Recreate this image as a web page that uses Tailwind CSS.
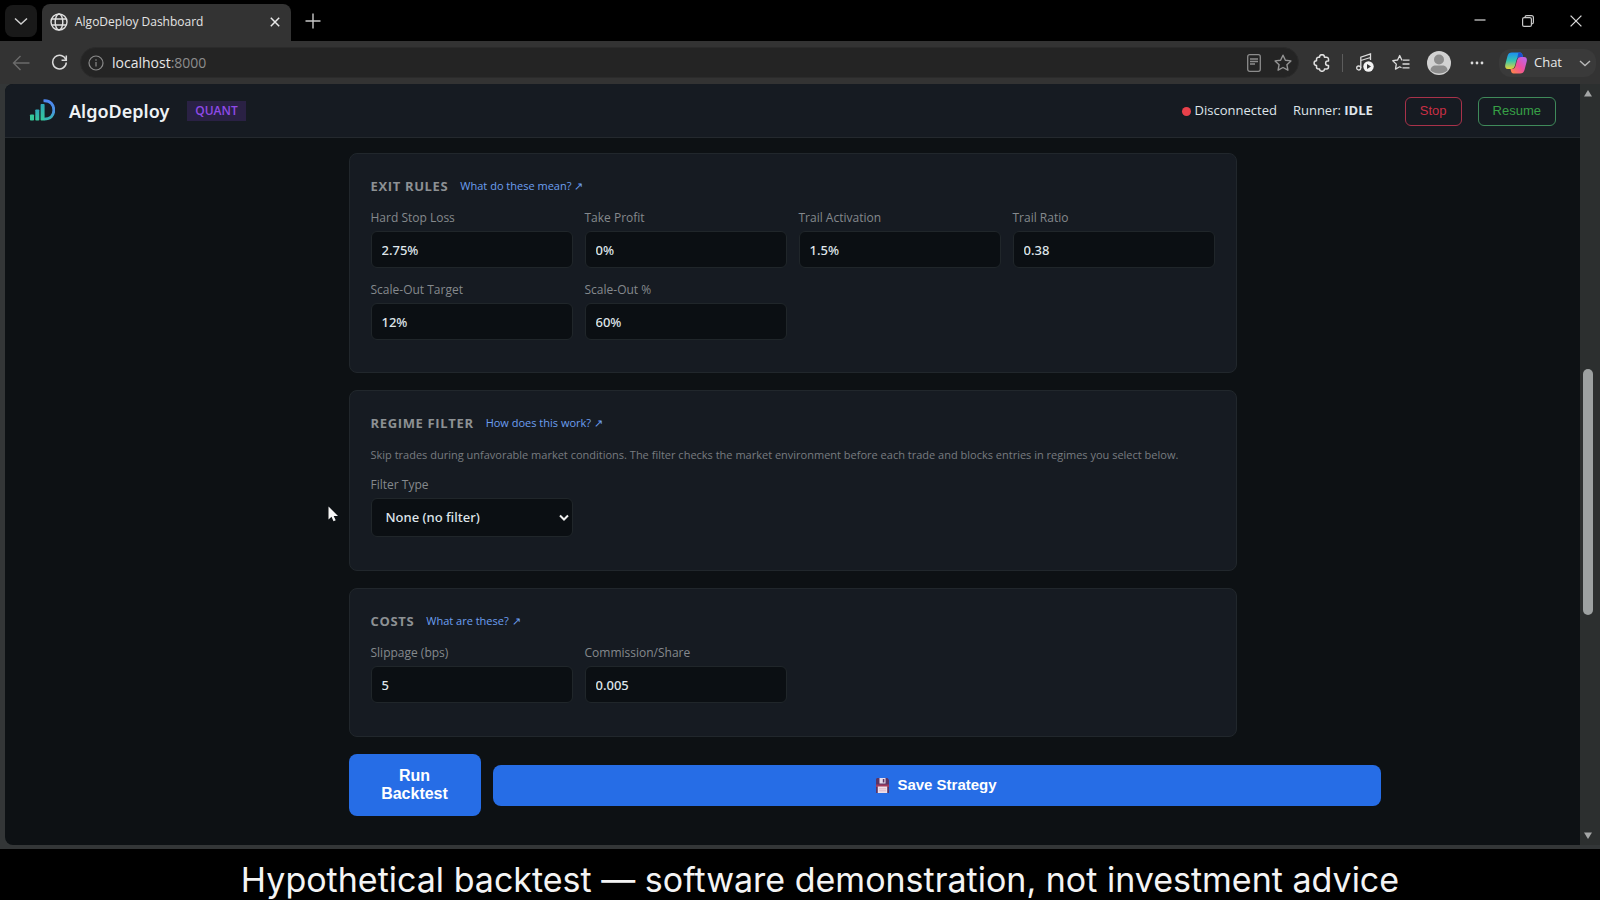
<!DOCTYPE html>
<html lang="en">
<head>
<meta charset="utf-8">
<meta name="viewport" content="width=device-width, initial-scale=1">
<title>AlgoDeploy Dashboard</title>
<script src="https://cdn.jsdelivr.net/npm/@tailwindcss/browser@4"></script>
</head>
<body class="relative flex h-screen flex-col overflow-hidden bg-black font-['Open_Sans','Noto_Sans',sans-serif] text-[#dfe5ea]">

  <!-- Tab strip -->
  <div class="flex h-[41px] shrink-0 items-end justify-between bg-black">
    <div class="flex h-full items-end">
      <button type="button" aria-label="Tab actions" class="mb-1 ml-[5px] flex h-8 w-8 items-center justify-center rounded-lg bg-[#191919]">
        <svg class="h-4 w-4" viewBox="0 0 16 16" fill="none" stroke="#d0d0d0" stroke-width="1.5"><path d="M2 5.500l6 5.500 6-5.500"/></svg>
      </button>
      <div class="ml-[5px] flex h-[37px] w-[249px] items-center rounded-t-lg bg-[#333333] px-2 pb-[2px]">
        <svg class="h-[18px] w-[18px] shrink-0" viewBox="0 0 18 18" fill="none" stroke="#e0e0e0" stroke-width="1.400"><circle cx="9" cy="9" r="8"/><ellipse cx="9" cy="9" rx="3.800" ry="8"/><path d="M1.800 6h14.400M1.800 12h14.400"/></svg>
        <span class="ml-[7px] flex-1 whitespace-nowrap text-[12px] text-[#e4e4e4]">AlgoDeploy Dashboard</span>
        <button type="button" aria-label="Close tab" class="flex h-4 w-4 items-center justify-center">
          <svg class="h-[10px] w-[10px]" viewBox="0 0 10 10" stroke="#e8e8e8" stroke-width="1.500"><path d="M.8.8l8.400 8.400M9.200.8L.8 9.200"/></svg>
        </button>
      </div>
      <button type="button" aria-label="New tab" class="ml-[14px] flex h-full w-4 items-center justify-center">
        <svg class="h-4 w-4" viewBox="0 0 16 16" stroke="#c8c8c8" stroke-width="1.400"><path d="M8 .5v15M.5 8h15"/></svg>
      </button>
    </div>
    <div class="flex h-full items-center gap-9 pr-[18px]">
      <button type="button" aria-label="Minimize" class="flex h-4 w-3 items-center justify-center"><svg class="h-3 w-3" viewBox="0 0 12 12" stroke="#c8c8c8" stroke-width="1.300"><path d="M.5 5h11"/></svg></button>
      <button type="button" aria-label="Restore" class="flex h-4 w-3 items-center justify-center"><svg class="h-3 w-3" viewBox="0 0 12 12" fill="none" stroke="#c8c8c8" stroke-width="1.200"><rect x=".6" y="2.600" width="8.800" height="8.800" rx="1.500"/><path d="M3 2.400C3 1.300 3.600.6 4.700.6h4.800c1.200 0 1.900.7 1.900 1.900v4.800c0 1.100-.7 1.700-1.800 1.700"/></svg></button>
      <button type="button" aria-label="Close window" class="flex h-4 w-3 items-center justify-center"><svg class="h-3 w-3" viewBox="0 0 12 12" stroke="#d8d8d8" stroke-width="1.300"><path d="M.6.6l10.800 10.800M11.400.6L.6 11.400"/></svg></button>
    </div>
  </div>

  <!-- Toolbar -->
  <div class="flex h-[43px] shrink-0 items-center bg-[#333333]">
    <button type="button" aria-label="Back" class="ml-3 flex h-5 w-[18px] items-center justify-center">
      <svg class="h-[18px] w-[18px]" viewBox="0 0 18 18" fill="none" stroke="#6b6b6b" stroke-width="1.400"><path d="M17.500 9H1.500M8.500 2L1.500 9l7 7"/></svg>
    </button>
    <button type="button" aria-label="Refresh" class="ml-5 flex h-5 w-[18px] items-center justify-center">
      <svg class="h-[17px] w-[17px]" viewBox="0 0 18 18" fill="none" stroke="#dadada" stroke-width="1.600"><path d="M15.800 6.200A7.200 7.200 0 1 0 16.200 9"/><path d="M16.200 1.500v5h-5"/></svg>
    </button>
    <div class="ml-3 flex h-[31px] flex-1 items-center rounded-full border border-[#2b2b2b] bg-[#242424] pl-[7px] pr-[6px]">
      <svg class="h-4 w-4 shrink-0" viewBox="0 0 16 16" fill="none" stroke="#8a8a8a" stroke-width="1.200"><circle cx="8" cy="8" r="7"/><path d="M8 7v4.500M8 4.300v1.400"/></svg>
      <div role="textbox" aria-label="Address" class="ml-2 flex-1 text-[14px] text-[#e8e8e8]">localhost<span class="text-[#8d8d8d]">:8000</span></div>
      <svg class="h-[18px] w-[14px]" viewBox="0 0 14 18" fill="none" stroke="#8c8c8c" stroke-width="1.300"><rect x=".7" y=".7" width="12.600" height="16.600" rx="2"/><path d="M3 5h8M3 7.500h8M3 10h5"/></svg>
      <svg class="ml-[13px] h-[18px] w-[18px]" viewBox="0 0 18 18" fill="none" stroke="#949494" stroke-width="1.400" stroke-linejoin="round"><path d="M9 1.200l2.400 5 5.500.7-4 3.800 1 5.500L9 13.500l-4.900 2.700 1-5.500-4-3.800 5.500-.7z"/></svg>
    </div>
    <button type="button" aria-label="Extensions" class="ml-[14px]">
      <svg class="h-[18px] w-[18px]" viewBox="0 0 18 18" fill="none" stroke="#e0e0e0" stroke-width="1.500" stroke-linejoin="round"><path d="M6.500 3.200a2.500 2.500 0 0 1 5 0H13.500a2 2 0 0 1 2 2V7h-.7a2.200 2.200 0 0 0 0 4.400h.7v1.600a2 2 0 0 1-2 2h-2a2.500 2.300 0 0 1-5 0h-1a2 2 0 0 1-2-2v-1.500a2.400 2.400 0 0 1 0-4.800V5.200a2 2 0 0 1 2-2z"/></svg>
    </button>
    <span class="ml-[11px] h-[18px] w-px bg-[#5c5c5c]"></span>
    <button type="button" aria-label="Media" class="ml-[13px]">
      <svg class="h-[19px] w-[18px]" viewBox="0 0 18 19" fill="none" stroke="#dcdcdc" stroke-width="1.300"><circle cx="2.700" cy="15" r="2"/><path d="M4.800 15V4.200L14.500 1v6M4.800 7.500l9.700-3"/><circle cx="12.500" cy="13.500" r="5.200" fill="#f2f2f2" stroke="none"/><path d="M11 11v5l4-2.500z" fill="#333" stroke="none"/></svg>
    </button>
    <button type="button" aria-label="Favorites" class="ml-[18px]">
      <svg class="h-[18px] w-[18px]" viewBox="0 0 18 18" fill="none" stroke="#dcdcdc" stroke-width="1.300" stroke-linejoin="round"><path d="M10.500 6.200L9.800 6 7.700 1.500 5.600 6 .8 6.700l3.500 3.400-.8 5 4.200-2.300 1.800 1"/><path d="M11 6.200h6.500M10.500 10h7M10.500 13.800h7"/></svg>
    </button>
    <button type="button" aria-label="Profile" class="ml-[17px] h-6 w-6">
      <svg class="h-6 w-6" viewBox="0 0 24 24"><circle cx="12" cy="12" r="12" fill="#d2d2d2"/><circle cx="12" cy="8.500" r="5" fill="#8c8c8c"/><path d="M3.500 19.500c0-3.500 2.500-5 5-5h7c2.500 0 5 1.500 5 5-4.500 4-12.500 4-17 0z" fill="#8c8c8c"/></svg>
    </button>
    <button type="button" aria-label="Settings and more" class="ml-[19px]">
      <svg class="h-4 w-[14px]" viewBox="0 0 14 16" fill="#dcdcdc"><circle cx="2" cy="8" r="1.400"/><circle cx="7" cy="8" r="1.400"/><circle cx="12" cy="8" r="1.400"/></svg>
    </button>
    <button type="button" class="ml-[15px] mr-1 flex h-7 items-center rounded-xl bg-[#3a3a3a] px-[5px] text-[13px] text-[#e8e8e8]">
      <svg class="h-6 w-6" viewBox="0 0 24 24">
        <defs>
          <linearGradient id="cpa" x1="0" y1="0" x2="0" y2="1"><stop offset="0" stop-color="#1b8df2"/><stop offset=".5" stop-color="#35c4b0"/><stop offset="1" stop-color="#e8d43a"/></linearGradient>
          <linearGradient id="cpb" x1="1" y1="0" x2="0" y2="1"><stop offset="0" stop-color="#b56af5"/><stop offset=".5" stop-color="#ee4fa0"/><stop offset="1" stop-color="#ff8a3c"/></linearGradient>
        </defs>
        <path d="M8 1.500h8c1.500 0 2 1 2.500 2.500L19 6h-3c-2 0-3 1-3.500 3L11 14.500C10.300 17 9 18 7 18H4c-2.500 0-3.300-2-2.700-4.500L3.500 5C4.200 2.500 5.500 1.500 8 1.500z" fill="url(#cpa)"/>
        <path d="M14.500 1.500H16c1.500 0 2 1 2.500 2.500L19 6h-3c-1.500 0-2.500.7-3 2z" fill="#1f4fd0"/>
        <path d="M16 22.500H9.500c-1.500 0-2.200-1-2.500-2.500L6.500 18H8c2 0 3-1 3.500-3L13 9.500c.7-2.500 2-3.500 4-3.500h3c2.500 0 3.300 2 2.700 4.500L20.500 19c-.7 2.500-2 3.500-4.500 3.500z" fill="url(#cpb)"/>
      </svg>
      <span class="ml-[6px]">Chat</span>
      <svg class="ml-[17px] h-3 w-3" viewBox="0 0 12 12" fill="none" stroke="#b8b8b8" stroke-width="1.400"><path d="M1 4l5 4.500L11 4"/></svg>
    </button>
  </div>

  <!-- Page viewport -->
  <div class="flex min-h-0 flex-1 bg-[#333637] pb-1 pl-[5px]">
    <div class="flex min-w-0 flex-1 flex-col overflow-hidden rounded-bl-lg rounded-tl-lg bg-[#0d1114]">
      <header class="flex h-[54px] shrink-0 items-center justify-between border-b border-[#24292e] bg-[#161b22] px-6 pt-px">
        <div class="flex items-center">
          <svg class="h-6 w-[26px]" viewBox="0 0 26 24">
            <defs>
              <linearGradient id="bar" x1="0" y1="0" x2="0" y2="1"><stop offset="0" stop-color="#2fa6b8"/><stop offset="1" stop-color="#35c99a"/></linearGradient>
              <linearGradient id="dee" x1="0" y1="0" x2="0" y2="1"><stop offset="0" stop-color="#4d86f0"/><stop offset=".6" stop-color="#4a94e0"/><stop offset="1" stop-color="#35b8b0"/></linearGradient>
            </defs>
            <rect x="1" y="15.500" width="4" height="6" rx=".8" fill="#35c99a"/>
            <rect x="6.300" y="10.500" width="4" height="11" rx=".8" fill="url(#bar)"/>
            <rect x="11.600" y="5" width="4" height="16.500" rx=".8" fill="url(#bar)"/>
            <path d="M14.500 1.800C21.500 1.200 24.800 6 24.800 11.300c0 5.300-3.300 8.800-9.800 8.800" fill="none" stroke="url(#dee)" stroke-width="2.800"/>
          </svg>
          <h1 class="ml-[14px] text-[18px] font-semibold text-[#eef2f5] font-['Noto_Sans',sans-serif]">AlgoDeploy</h1>
          <span class="ml-[18px] bg-[#2a2144] px-2 text-[12px] font-semibold leading-5 text-[#8f4ae8]">QUANT</span>
        </div>
        <div class="flex items-center text-[13px]">
          <span class="h-[9px] w-[9px] rounded-full bg-[#e8404a]"></span>
          <span class="ml-1">Disconnected</span>
          <span class="ml-4">Runner: <strong class="font-bold">IDLE</strong></span>
          <button type="button" class="ml-8 h-[29px] rounded-md border border-[#a8324a] px-[14px] font-['Liberation_Sans',sans-serif] text-[13px] text-[#c92f45]">Stop</button>
          <button type="button" class="ml-4 h-[29px] rounded-md border border-[#3f8a5a] px-[14px] font-['Liberation_Sans',sans-serif] text-[13px] text-[#37a046]">Resume</button>
        </div>
      </header>

      <main class="mx-auto flex w-full max-w-[888px] flex-col gap-[17px] pt-[15px]">
        <section class="rounded-lg border border-[#21272c] bg-[#161b22] px-[21px] pb-8 pt-5">
          <div class="mb-[10px] flex items-center gap-3 leading-6">
            <h2 class="text-[13px] font-bold tracking-wider text-[#8d9194]">EXIT RULES</h2>
            <a href="#exit-rules" class="text-[11px] text-[#6c9ff0]">What do these mean? ↗</a>
          </div>
          <div class="grid grid-cols-4 gap-3">
            <div class="flex flex-col gap-[3px]"><label for="stop" class="text-[12px] leading-5 text-[#85898d]">Hard Stop Loss</label><input id="stop" value="2.75%" class="h-[37px] w-full rounded-md border border-[#20262a] bg-[#0b0f13] px-[10px] font-['Noto_Sans',sans-serif] text-[13px] font-medium"></div>
            <div class="flex flex-col gap-[3px]"><label for="tp" class="text-[12px] leading-5 text-[#85898d]">Take Profit</label><input id="tp" value="0%" class="h-[37px] w-full rounded-md border border-[#20262a] bg-[#0b0f13] px-[10px] font-['Noto_Sans',sans-serif] text-[13px] font-medium"></div>
            <div class="flex flex-col gap-[3px]"><label for="ta" class="text-[12px] leading-5 text-[#85898d]">Trail Activation</label><input id="ta" value="1.5%" class="h-[37px] w-full rounded-md border border-[#20262a] bg-[#0b0f13] px-[10px] font-['Noto_Sans',sans-serif] text-[13px] font-medium"></div>
            <div class="flex flex-col gap-[3px]"><label for="tr" class="text-[12px] leading-5 text-[#85898d]">Trail Ratio</label><input id="tr" value="0.38" class="h-[37px] w-full rounded-md border border-[#20262a] bg-[#0b0f13] px-[10px] font-['Noto_Sans',sans-serif] text-[13px] font-medium"></div>
            <div class="flex flex-col gap-[3px]"><label for="sot" class="text-[12px] leading-5 text-[#85898d]">Scale-Out Target</label><input id="sot" value="12%" class="h-[37px] w-full rounded-md border border-[#20262a] bg-[#0b0f13] px-[10px] font-['Noto_Sans',sans-serif] text-[13px] font-medium"></div>
            <div class="flex flex-col gap-[3px]"><label for="sop" class="text-[12px] leading-5 text-[#85898d]">Scale-Out %</label><input id="sop" value="60%" class="h-[37px] w-full rounded-md border border-[#20262a] bg-[#0b0f13] px-[10px] font-['Noto_Sans',sans-serif] text-[13px] font-medium"></div>
          </div>
        </section>

        <section class="rounded-lg border border-[#21272c] bg-[#161b22] px-[21px] pb-[33px] pt-5">
          <div class="mb-[10px] flex items-center gap-3 leading-6">
            <h2 class="text-[13px] font-bold tracking-wider text-[#8d9194]">REGIME FILTER</h2>
            <a href="#regime-filter" class="text-[11px] text-[#6c9ff0]">How does this work? ↗</a>
          </div>
          <p class="mb-[10px] text-[11px] leading-5 text-[#787c80]">Skip trades during unfavorable market conditions. The filter checks the market environment before each trade and blocks entries in regimes you select below.</p>
          <div class="grid grid-cols-4 gap-3">
            <div class="flex flex-col gap-[3px]">
              <label for="ft" class="text-[12px] leading-5 text-[#85898d]">Filter Type</label>
              <div class="relative">
                <select id="ft" class="h-[39px] w-full appearance-none rounded-md border border-[#20262a] bg-[#0b0f13] pl-[14px] pr-6 font-['Noto_Sans',sans-serif] text-[13px] font-medium"><option>None (no filter)</option></select>
                <svg class="pointer-events-none absolute right-1 top-4 h-2 w-[10px]" viewBox="0 0 10 8" fill="none" stroke="#f0f0f0" stroke-width="2"><path d="M1 1.500l4 4 4-4"/></svg>
              </div>
            </div>
          </div>
        </section>

        <section class="rounded-lg border border-[#21272c] bg-[#161b22] px-[21px] pb-[33px] pt-5">
          <div class="mb-[10px] flex items-center gap-3 leading-6">
            <h2 class="text-[13px] font-bold tracking-wider text-[#8d9194]">COSTS</h2>
            <a href="#costs" class="text-[11px] text-[#6c9ff0]">What are these? ↗</a>
          </div>
          <div class="grid grid-cols-4 gap-3">
            <div class="flex flex-col gap-[3px]"><label for="slip" class="text-[12px] leading-5 text-[#85898d]">Slippage (bps)</label><input id="slip" value="5" class="h-[37px] w-full rounded-md border border-[#20262a] bg-[#0b0f13] px-[10px] font-['Noto_Sans',sans-serif] text-[13px] font-medium"></div>
            <div class="flex flex-col gap-[3px]"><label for="comm" class="text-[12px] leading-5 text-[#85898d]">Commission/Share</label><input id="comm" value="0.005" class="h-[37px] w-full rounded-md border border-[#20262a] bg-[#0b0f13] px-[10px] font-['Noto_Sans',sans-serif] text-[13px] font-medium"></div>
          </div>
        </section>

        <div class="flex items-center gap-3 font-['Liberation_Sans',sans-serif] font-bold leading-[18px] text-white">
          <button type="button" class="w-[132px] shrink-0 rounded-lg bg-[#266de6] px-7 py-[13px] text-[16px]">Run Backtest</button>
          <button type="button" class="flex h-[41px] w-full shrink-0 items-center justify-center gap-2 rounded-lg bg-[#266de6] text-[15px]">
            <svg class="h-[15px] w-[13px]" viewBox="0 0 13 15"><path d="M1 0h10.500L13 2v13H0V1z" fill="#5a3566"/><rect x="3.500" y="0" width="6" height="5.500" fill="#e6dcec"/><rect x="6.800" y="1" width="1.600" height="3.500" fill="#5a3566"/><path d="M0 6.500h13V9H0z" fill="#a03a5c"/><rect x="1.800" y="8.500" width="9.400" height="6.500" fill="#f0dfe8"/><path d="M3 10.800h7M3 12.800h7" stroke="#d09ab0" stroke-width=".6"/></svg>
            Save Strategy
          </button>
        </div>
      </main>
    </div>

    <!-- Scroll track -->
    <div class="flex w-5 shrink-0 flex-col items-center bg-[#2c2f2f] py-[6px] pr-1">
      <svg class="h-[7px] w-2" viewBox="0 0 8 7" fill="#a4a6a6"><path d="M4 0l4 6.500H0z"/></svg>
      <div class="flex w-full flex-1 flex-col items-center">
        <div class="grow-[272]"></div>
        <div class="w-[10px] grow-[246] rounded-full bg-[#9da1a1]"></div>
        <div class="grow-[217]"></div>
      </div>
      <svg class="h-[7px] w-2" viewBox="0 0 8 7" fill="#a4a6a6"><path d="M4 7l4-6.500H0z"/></svg>
    </div>
  </div>

  <!-- Caption -->
  <p class="h-[51px] shrink-0 whitespace-nowrap pl-[40px] text-center font-['Inter',sans-serif] text-[34px] leading-[62px] text-[#f4f4f4]">Hypothetical backtest — software demonstration, not investment advice</p>

  <!-- Mouse pointer -->
  <svg class="absolute left-[328px] top-[506px] h-4 w-[11px]" viewBox="0 0 11 16" fill="#f6f6f6"><path d="M.5.5v13l3-2.800 2 4.500 2.200-1-2-4.300h4.300z"/></svg>
</body>
</html>
